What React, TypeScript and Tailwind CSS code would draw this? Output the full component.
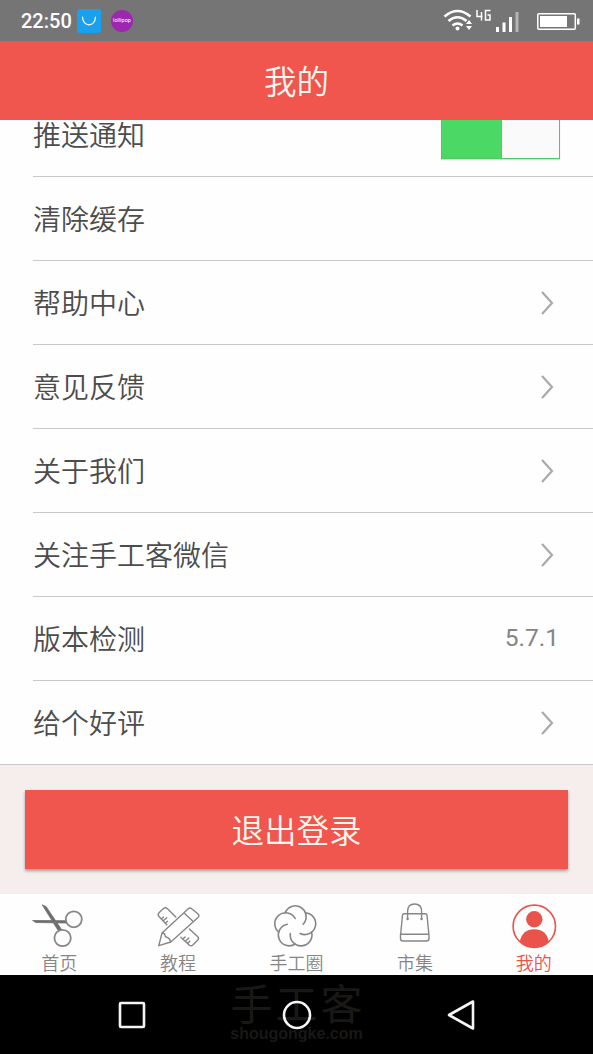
import type { ReactNode } from 'react'

interface Setting {
  label: string
  kind?: 'toggle' | 'link'
  value?: string
}

const settings: Setting[] = [
  { label: '推送通知', kind: 'toggle' },
  { label: '清除缓存' },
  { label: '帮助中心', kind: 'link' },
  { label: '意见反馈', kind: 'link' },
  { label: '关于我们', kind: 'link' },
  { label: '关注手工客微信', kind: 'link' },
  { label: '版本检测', value: '5.7.1' },
  { label: '给个好评', kind: 'link' },
]

function StatusBar() {
  return (
    <div className="flex h-[41px] shrink-0 items-center bg-[#757575] pl-[21px] pr-[13px] text-white">
      <span className="w-[56px] font-['Roboto',sans-serif] text-[20px] font-medium">22:50</span>
      <span className="flex h-6 w-6 items-center justify-center rounded-[3px] bg-[#1ba0ee]">
        <svg width="16" height="12" viewBox="0 0 16 12" fill="none" stroke="white" strokeWidth="1.2" strokeLinecap="round">
          <path d="M1.500 2C2 12.500 14 12.500 14.500 2" />
        </svg>
      </span>
      <span className="ml-[10px] flex h-[22px] w-[22px] items-center justify-center rounded-full bg-[#9c27b0] font-['Roboto',sans-serif] text-[5.5px]">
        lollipop
      </span>
      <svg className="ml-auto" width="137" height="30" viewBox="443 5 137 30" fill="none" stroke="white">
        <path d="M444.500 15.500Q457.500 4.500 470.500 15.500M448.500 20Q457.500 12.500 466.500 20M452.500 24.500Q457.500 20.500 462.500 24.500" strokeWidth="2.600" />
        <circle cx="457.500" cy="27.500" r="2" fill="white" stroke="none" />
        <path d="M466 23l3-4 3 4zM466 25h6l-3 4z" fill="white" stroke="none" />
        <path d="M477 9v6.500h5.500M481.500 11v8.500M490.500 9.500h-5v9.500h4.500v-5h-2.500" strokeWidth="1.500" />
        <path d="M497.500 31v-5M504 31v-9.500M510.500 31v-15" strokeWidth="3" />
        <path d="M517 31V11" stroke="#b5b5b5" strokeWidth="3" />
        <rect x="537.800" y="12.800" width="37.500" height="15.400" rx="1" strokeWidth="1.500" />
        <path d="M540 15h27v11h-27zM577 17.500h2.500v6h-2.500z" fill="white" stroke="none" />
      </svg>
    </div>
  )
}

function SettingRow({ label, kind, value }: Setting) {
  return (
    <div className="flex h-[84px] items-center justify-between border-b border-[#c9c7c8] pr-[34px]">
      <span className="pb-[2px] text-[28px] leading-none font-[350] text-[#4c4c4c]">{label}</span>
      {kind === 'toggle' && (
        <span className="-mr-px flex h-12 w-[119px] border border-[#4fc764] bg-[#fafafb] shadow-[0_1px_1px_#d5ddd6]">
          <span className="w-[60px] border-r border-[#7fae87] bg-[#4cd864]" />
        </span>
      )}
      {kind === 'link' && (
        <svg className="mr-[5px]" width="14" height="26" viewBox="0 0 14 26" fill="none" stroke="#aaa" strokeWidth="2.2">
          <path d="M2 2l10 11L2 24" />
        </svg>
      )}
      {value && (
        <span className="font-['Roboto',sans-serif] text-[24.5px] text-[#858585]">{value}</span>
      )}
    </div>
  )
}

function TabIcon({ children }: { children: ReactNode }) {
  return (
    <svg
      width="60"
      height="50"
      viewBox="0 0 60 50"
      fill="none"
      stroke="currentColor"
      strokeWidth="1.4"
      strokeLinecap="round"
      strokeLinejoin="round"
    >
      {children}
    </svg>
  )
}

const tabs = [
  {
    label: '首页',
    icon: (
      <TabIcon>
        <path d="M4 20.500L37 20.700V23L7 22.500zM13.500 5l3.500 1.500L32.500 29.500l-3 1.500L22 19z" fill="#6d6d6d" stroke="#6d6d6d" strokeWidth=".8" />
        <circle cx="44.800" cy="19.300" r="8" strokeWidth="1.800" />
        <circle cx="33.600" cy="38" r="8.200" strokeWidth="1.800" />
      </TabIcon>
    ),
  },
  {
    label: '教程',
    icon: (
      <TabIcon>
        <path d="M10.800 45.700L14 33 40 9Q42 7.200 44 9l6 5q1.800 1.700 0 3.600L22.800 42zM14 33q3 0 3.400 3.800Q21.500 37.500 22.800 42M36.400 13.300l8 7.400" />
        <path d="M18.800 24.700L11 16.500Q9.400 14.500 11 12.800l4.500-4.300Q17.500 7 19.500 8.700L27.800 17M13.300 18.900l2.200-2M15 21l3.700-3.300M17.300 23.200l2.200-2" />
        <path d="M41.400 29l8.400 7.700q1.500 1.600 0 3.300l-5 5q-1.800 1.500-3.600 0L32.800 37.300M34.800 39.200l2.300-2.200M37.200 41.500l3.600-3.500M39.500 43.500l2.300-2.200" />
      </TabIcon>
    ),
  },
  {
    label: '手工圈',
    icon: (
      <TabIcon>
        <g transform="translate(29.200 26.800)" strokeWidth="1.600">
          <path d="M-10.100-13.900A10.850 10.850 0 1 1 7.900-2.600" />
          <path d="M-10.100-13.900A10.850 10.850 0 1 1 7.900-2.600" transform="rotate(72)" />
          <path d="M-10.100-13.900A10.850 10.850 0 1 1 7.900-2.600" transform="rotate(144)" />
          <path d="M-10.100-13.900A10.850 10.850 0 1 1 7.900-2.600" transform="rotate(216)" />
          <path d="M-10.100-13.900A10.850 10.850 0 1 1 7.900-2.600" transform="rotate(288)" />
        </g>
      </TabIcon>
    ),
  },
  {
    label: '市集',
    icon: (
      <TabIcon>
        <path d="M19 13.700h21.300q1.500 0 1.700 1.500l2 20.500v2.800q0 2.500-2.500 2.500h-23.500q-2.500 0-2.500-2.500v-2.800l2-20.500q.2-1.500 1.500-1.500zM15.500 34.300h28.300" />
        <path d="M22.600 19v-7.500q0-7.500 7-7.500t7 7.500V19" />
        <circle cx="22.600" cy="19" r="1.200" fill="currentColor" stroke="none" />
        <circle cx="36.600" cy="19" r="1.200" fill="currentColor" stroke="none" />
      </TabIcon>
    ),
  },
  {
    label: '我的',
    active: true,
    icon: (
      <TabIcon>
        <circle cx="30.300" cy="26.300" r="21.200" strokeWidth="1.600" />
        <circle cx="30.300" cy="19.300" r="8.200" fill="currentColor" stroke="none" />
        <path d="M15.800 41.300Q18.500 29.300 30.300 29.300T44.800 41.300Q38.500 47.500 30.300 47.500T15.800 41.300z" fill="currentColor" stroke="none" />
      </TabIcon>
    ),
  },
]

function SystemNav() {
  return (
    <div className="relative flex h-[79px] shrink-0 items-center justify-between bg-black px-[116px]">
      {/* Watermark sits behind the keys */}
      <div className="absolute inset-x-0 top-[6px] flex flex-col items-center text-[#191817]">
        <span className="pl-[3px] text-[42px] leading-[42px] tracking-[3px]">手工客</span>
        <span className="font-['Liberation_Sans',sans-serif] text-[16px] leading-[22px] font-bold">shougongke.com</span>
      </div>
      <svg className="relative" width="32" height="32" viewBox="0 0 32 32" fill="none" stroke="#f5f5f5" strokeWidth="2.600">
        <rect x="4" y="4" width="24" height="24" rx="1" />
      </svg>
      <svg className="relative" width="32" height="32" viewBox="0 0 32 32" fill="none" stroke="#f5f5f5" strokeWidth="2.600">
        <circle cx="16" cy="16" r="13" />
      </svg>
      <svg className="relative" width="32" height="32" viewBox="0 0 32 32" fill="none" stroke="#f5f5f5" strokeWidth="2.600" strokeLinejoin="round">
        <path d="M28 2.500v27L4 16z" />
      </svg>
    </div>
  )
}

export default function App() {
  return (
    <div className="flex h-[1054px] w-[593px] flex-col overflow-hidden bg-[#fefefe] font-['Noto_Sans_CJK_SC',sans-serif]">
      <StatusBar />

      <header className="flex h-[79px] shrink-0 items-center justify-center bg-[#f0564e] text-[32.5px] font-[350] text-[#fff8ee]">
        我的
      </header>

      {/* List is scrolled slightly under the header */}
      <main className="flex h-[774px] shrink-0 flex-col overflow-hidden bg-[#f5eeed]">
        <div className="-mt-[27px] shrink-0 border-b border-[#c9c7c8] bg-[#fefefe] pl-[33px]">
          <div className="-mb-px">
            {settings.map((item) => (
              <SettingRow key={item.label} {...item} />
            ))}
          </div>
        </div>
        <div className="px-[25px] pt-[25px]">
          <button className="h-[79px] w-full bg-[#f0564e] text-[32.5px] font-[350] text-[#fff8ee] shadow-[0_2px_3px_rgba(0,0,0,0.35)]">
            退出登录
          </button>
        </div>
      </main>

      <nav className="grid h-[81px] shrink-0 grid-cols-5 bg-[#fefefe] pt-[6px]">
        {tabs.map((tab) => (
          <div
            key={tab.label}
            className={`flex flex-col items-center ${tab.active ? 'text-[#e9534c]' : 'text-[#868686]'}`}
          >
            {tab.icon}
            <span className="text-[18px] leading-[24px] font-[350]">{tab.label}</span>
          </div>
        ))}
      </nav>

      <SystemNav />
    </div>
  )
}
